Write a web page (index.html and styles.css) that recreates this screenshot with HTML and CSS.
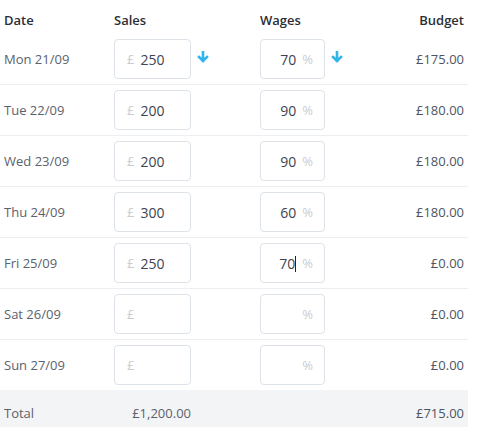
FILE: index.html
```html
<!DOCTYPE html>
<html lang="en">
<head>
    <meta charset="UTF-8">
    <meta name="viewport" content="width=device-width, initial-scale=1.0">
    <title>Weekly Budget</title>
    <link rel="stylesheet" href="styles.css">
</head>
<body>
    <table class="budget-table">
        <thead>
            <tr>
                <th class="col-date">Date</th>
                <th class="col-sales">Sales</th>
                <th class="col-wages">Wages</th>
                <th class="col-budget">Budget</th>
            </tr>
        </thead>
        <tbody>
            <tr>
                <td>Mon 21/09</td>
                <td>
                    <div class="cell-wrap">
                        <div class="field field-sales"><span class="unit">£</span><span class="value">250</span></div>
                        <svg class="arrow" width="12" height="12" viewBox="0 0 12 12"><path d="M6 1 V10 M2 6 L6 10 L10 6" fill="none" stroke="#2fb4ec" stroke-width="2.6" stroke-linecap="square"/></svg>
                    </div>
                </td>
                <td>
                    <div class="cell-wrap">
                        <div class="field field-wages"><span class="value">70</span><span class="unit">%</span></div>
                        <svg class="arrow" width="12" height="12" viewBox="0 0 12 12"><path d="M6 1 V10 M2 6 L6 10 L10 6" fill="none" stroke="#2fb4ec" stroke-width="2.6" stroke-linecap="square"/></svg>
                    </div>
                </td>
                <td class="col-budget">£175.00</td>
            </tr>
            <tr>
                <td>Tue 22/09</td>
                <td><div class="field field-sales"><span class="unit">£</span><span class="value">200</span></div></td>
                <td><div class="field field-wages"><span class="value">90</span><span class="unit">%</span></div></td>
                <td class="col-budget">£180.00</td>
            </tr>
            <tr>
                <td>Wed 23/09</td>
                <td><div class="field field-sales"><span class="unit">£</span><span class="value">200</span></div></td>
                <td><div class="field field-wages"><span class="value">90</span><span class="unit">%</span></div></td>
                <td class="col-budget">£180.00</td>
            </tr>
            <tr>
                <td>Thu 24/09</td>
                <td><div class="field field-sales"><span class="unit">£</span><span class="value">300</span></div></td>
                <td><div class="field field-wages"><span class="value">60</span><span class="unit">%</span></div></td>
                <td class="col-budget">£180.00</td>
            </tr>
            <tr>
                <td>Fri 25/09</td>
                <td><div class="field field-sales"><span class="unit">£</span><span class="value">250</span></div></td>
                <td><div class="field field-wages"><span class="value">70<span class="caret"></span></span><span class="unit">%</span></div></td>
                <td class="col-budget">£0.00</td>
            </tr>
            <tr>
                <td>Sat 26/09</td>
                <td><div class="field field-sales"><span class="unit">£</span></div></td>
                <td><div class="field field-wages"><span class="unit">%</span></div></td>
                <td class="col-budget">£0.00</td>
            </tr>
            <tr>
                <td>Sun 27/09</td>
                <td><div class="field field-sales"><span class="unit">£</span></div></td>
                <td><div class="field field-wages"><span class="unit">%</span></div></td>
                <td class="col-budget">£0.00</td>
            </tr>
        </tbody>
        <tfoot>
            <tr>
                <td>Total</td>
                <td><div class="total-sales">£1,200.00</div></td>
                <td></td>
                <td class="col-budget">£715.00</td>
            </tr>
        </tfoot>
    </table>
</body>
</html>
```

FILE: styles.css
```css
body {
    font-family: "Open Sans", Arial, sans-serif;
    font-size: 13px;
    margin: 0;
    background-color: #fff;
    color: #5b626d;
}
.budget-table {
    width: 468px;
    border-collapse: collapse;
    table-layout: fixed;
}
th, td {
    padding: 0 4px;
    text-align: left;
    white-space: nowrap;
}
th {
    height: 28px;
    font-weight: 600;
    color: #2b2f36;
    padding-top: 6px;
}
tbody td {
    height: 50px;
    border-bottom: 1px solid #eceef1;
}
tbody tr:last-child td {
    border-bottom: none;
}
.col-date { width: 102px; }
.col-sales { width: 138px; }
.col-wages { width: 119px; }
.col-budget {
    text-align: right;
    color: #4d5461;
}
th.col-budget { color: #2b2f36; }
.cell-wrap {
    display: flex;
    align-items: center;
    gap: 6px;
}
.arrow {
    display: block;
    margin-top: -4px;
}
.field {
    box-sizing: border-box;
    height: 40px;
    border: 1px solid #dde3e8;
    border-radius: 4px;
    display: flex;
    align-items: center;
    gap: 6px;
    color: #3d4450;
    font-size: 14px;
}
.field-sales {
    width: 77px;
    padding-left: 12px;
}
.field-wages {
    width: 65px;
    padding-right: 11px;
    justify-content: flex-end;
}
.unit {
    color: #c9cdd3;
    font-size: 13px;
}
.caret {
    display: inline-block;
    width: 1px;
    height: 16px;
    background-color: #222;
    vertical-align: -3px;
}
tfoot td {
    height: 46px;
    background-color: #f3f4f6;
    color: #5b626d;
}
.total-sales {
    width: 77px;
    text-align: right;
}
```
